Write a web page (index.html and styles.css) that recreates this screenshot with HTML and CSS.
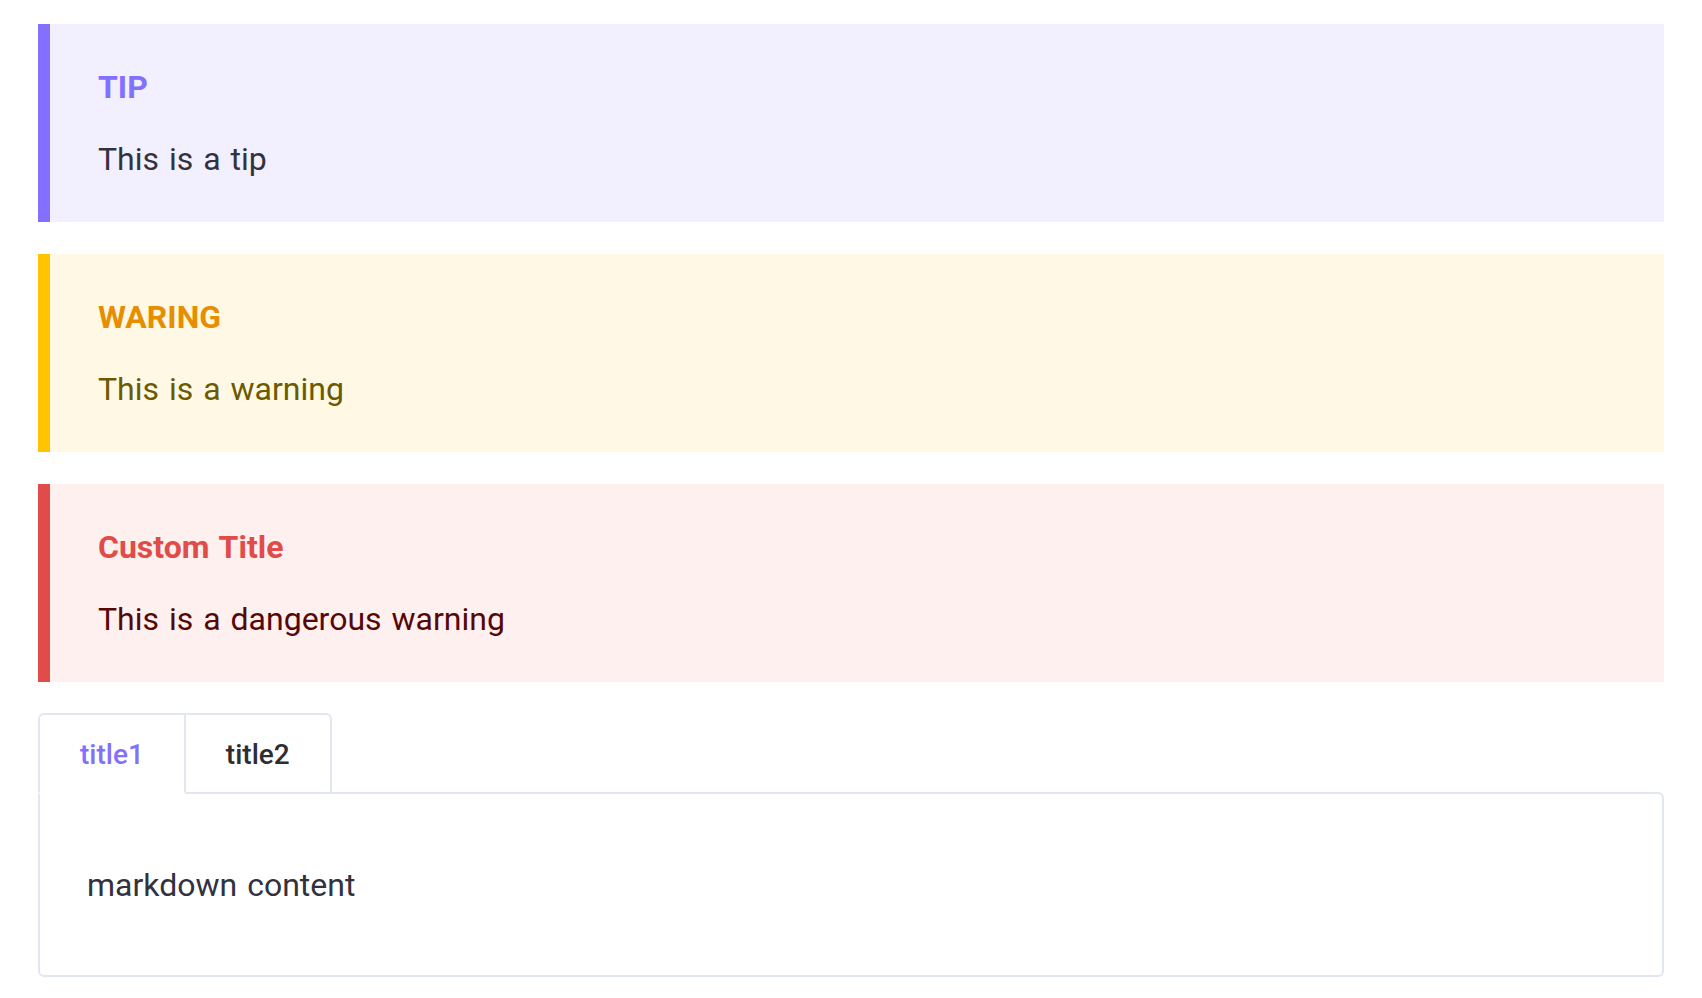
FILE: index.html
```html
<!DOCTYPE html>
<html lang="en">
<head>
<meta charset="utf-8">
<title>Callouts</title>
<link rel="stylesheet" href="styles.css">
</head>
<body>
<main class="page">
  <div class="callout callout-tip">
    <p class="callout-title">TIP</p>
    <p class="callout-body">This is a tip</p>
  </div>
  <div class="callout callout-warning">
    <p class="callout-title">WARING</p>
    <p class="callout-body">This is a warning</p>
  </div>
  <div class="callout callout-danger">
    <p class="callout-title">Custom Title</p>
    <p class="callout-body">This is a dangerous warning</p>
  </div>
  <div class="tabs">
    <div class="tab-list">
      <button class="tab tab-active">title1</button>
      <button class="tab">title2</button>
    </div>
    <div class="tab-panel">
      <p>markdown content</p>
    </div>
  </div>
</main>
</body>
</html>
```

FILE: styles.css
```css
* { box-sizing: border-box; }
html, body { margin: 0; padding: 0; background: #ffffff; }
body {
  font-family: Roboto, "Liberation Sans", sans-serif;
  color: #30303d;
  word-spacing: 2px;
}
.page {
  padding: 24px 38px 0 38px;
  display: flex;
  flex-direction: column;
  gap: 32px;
}
.callout {
  border-left: 12px solid;
  padding: 39px 48px 39px 48px;
  display: flex;
  flex-direction: column;
  gap: 24px;
}
.callout p { margin: 0; font-size: 32px; line-height: 48px; }
.callout-title { font-weight: 700; }
.callout-tip { background: #f2f0ff; border-left-color: #8470ff; }
.callout-tip .callout-title { color: #8470ff; }
.callout-tip .callout-body { color: #32323f; }
.callout-warning { background: #fff8e5; border-left-color: #ffc300; }
.callout-warning .callout-title { color: #e78e00; }
.callout-warning .callout-body { color: #6b5a00; }
.callout-danger { background: #fef0ef; border-left-color: #e04c48; }
.callout-danger .callout-title { color: #e04c48; }
.callout-danger .callout-body { color: #560707; }

.tabs { display: flex; flex-direction: column; margin-top: -1px; }
.tab-list { display: flex; margin-bottom: -2px; }
.tab {
  position: relative;
  z-index: 1;
  font-family: Roboto, "Liberation Sans", sans-serif;
  font-size: 28px;
  font-weight: 500;
  line-height: 40px;
  word-spacing: 2px;
  color: #2d2d33;
  background: #ffffff;
  border: 2px solid #e2e6f0;
  padding: 20px 40px 17px 40px;
  margin: 0;
  cursor: pointer;
}
.tab:first-child { border-top-left-radius: 6px; }
.tab:last-child { border-top-right-radius: 6px; border-left: none; }
.tab-active { color: #8470ff; border-bottom-color: #ffffff; }
.tab-panel {
  border: 2px solid #e2e6f0;
  border-radius: 0 6px 6px 6px;
  padding: 67px 47px 66px 47px;
}
.tab-panel p { margin: 0; font-size: 32px; line-height: 48px; color: #32323f; }
```
